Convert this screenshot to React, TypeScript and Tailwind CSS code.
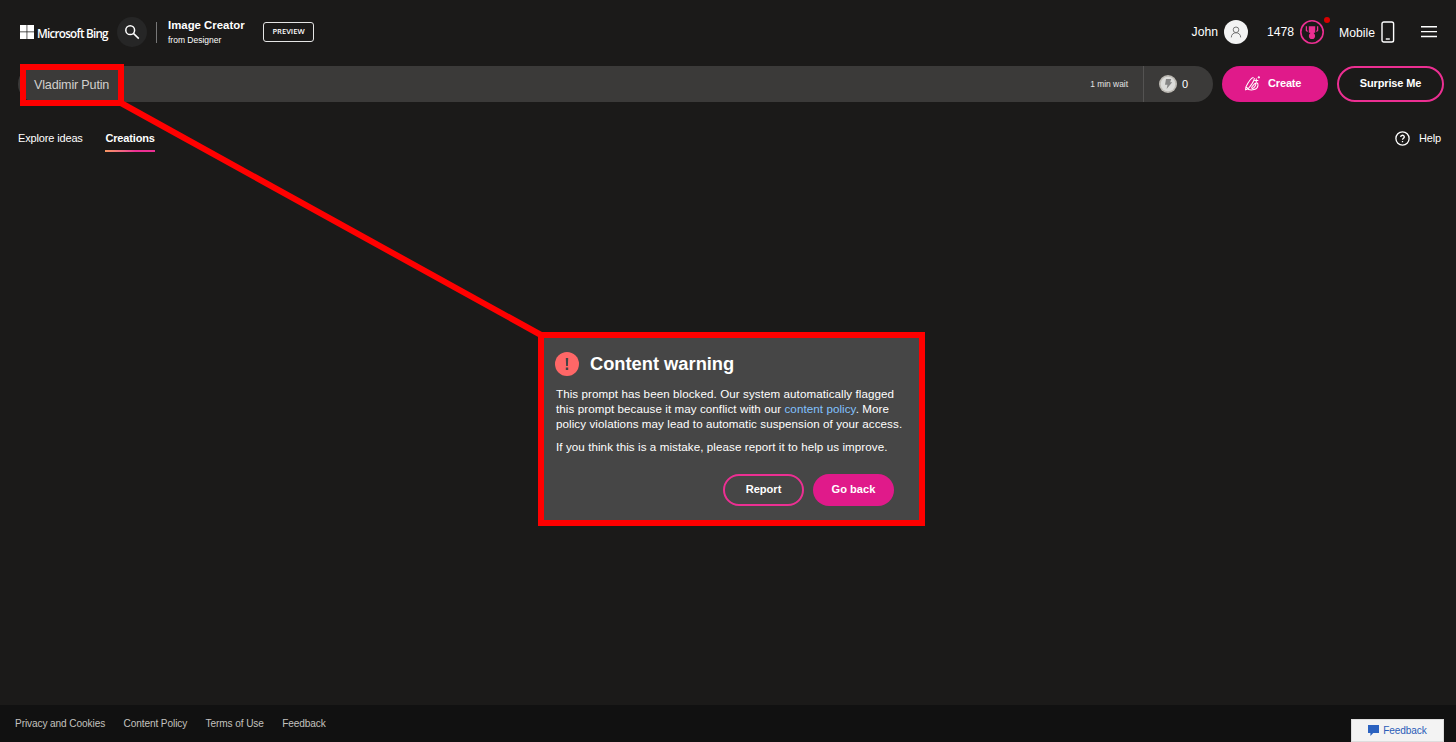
import React from "react";

const footerLinks = ["Privacy and Cookies", "Content Policy", "Terms of Use", "Feedback"];

const BingLogo = () => (
  <div className="flex items-center w-[97px]">
    <svg viewBox="0 0 14 14" className="w-[14px] h-[14px] mr-[3px] shrink-0" fill="#fff">
      <path d="M0 0h6.6v6.6H0zM7.3 0H14v6.6H7.3zM0 7.3h6.6V14H0zM7.3 7.3H14V14H7.3z" />
    </svg>
    <span className="font-['Open_Sans'] font-semibold text-[11.7px] leading-4 tracking-[-0.77px] pt-px whitespace-nowrap">
      Microsoft Bing
    </span>
  </div>
);

const Header = () => (
  <header className="flex items-center h-[64px] pl-5 pr-[19px]">
    <BingLogo />
    <button className="w-[30px] h-[30px] rounded-full bg-[#262626] flex items-center justify-center shrink-0">
      <svg viewBox="0 0 16 16" className="w-4 h-4" fill="none" stroke="#fff" strokeWidth="1.5">
        <circle cx="6.2" cy="6.2" r="4.4" />
        <path d="M9.4 9.4l5.4 5.2" />
      </svg>
    </button>
    <div className="w-px h-[21px] bg-[#777] ml-[9px] mr-[11px]" />
    <div className="w-[95px] whitespace-nowrap">
      <div className="font-bold text-[11.4px] leading-[14px]">Image Creator</div>
      <div className="text-[8.5px] leading-[14px] pt-px">from Designer</div>
    </div>
    <div className="w-[51px] h-5 border border-[#e5e5e5] rounded-[3px] flex items-center justify-center font-['Open_Sans'] font-semibold text-[7.6px]">
      PREVIEW
    </div>

    <div className="ml-auto flex items-center text-[12.2px]">
      <span>John</span>
      <span className="ml-[6px] w-6 h-6 rounded-full bg-[#f3f3f3] flex items-center justify-center">
        <svg viewBox="0 0 12 12" className="w-3 h-3" fill="none" stroke="#777" strokeWidth="1">
          <circle cx="6" cy="3.8" r="2.8" />
          <path d="M1.3 11.4c0-6.2 9.4-6.2 9.4 0" />
        </svg>
      </span>
      <span className="ml-[19px]">1478</span>
      <span className="relative ml-[6px]">
        <svg viewBox="0 0 24 24" className="w-6 h-6">
          <circle cx="12" cy="12" r="11.2" fill="none" stroke="#ec2f92" strokeWidth="1.6" />
          <path d="M8.8 6.2h6.4v6.6h-1.4v2h-3.6v-2H8.8z" fill="#ec2f92" />
          <path d="M6.4 6.2v4.2l1.2 1M17.6 6.2v4.2l-1.2 1" fill="none" stroke="#ec2f92" strokeWidth="1.3" />
          <circle cx="12" cy="16" r="3.1" fill="#ec2f92" />
        </svg>
        <span className="absolute -top-[3px] left-[24px] w-[6px] h-[6px] rounded-full bg-[#d80000]" />
      </span>
      <span className="ml-[15px] pt-[2px]">Mobile</span>
      <svg viewBox="0 0 14 22" className="ml-[6px] w-[14px] h-[22px]" fill="none" stroke="#fff" strokeWidth="1.4">
        <rect x="1" y="1" width="11.6" height="20" rx="1.8" />
        <path d="M4.8 18h4" />
      </svg>
      <svg viewBox="0 0 16 12" className="ml-[26px] w-4 h-3" stroke="#fff" strokeWidth="1.4">
        <path d="M0 .8h16M0 5.6h16M0 10.5h16" />
      </svg>
    </div>
  </header>
);

const PromptBar = () => (
  <div className="flex items-center pl-[18px] pr-3 mt-[2px] h-9">
    <div className="relative w-[1195px] h-9 rounded-full bg-[#3b3a39] flex items-center">
      <span className="pl-4 pt-[2px] text-[12.6px] tracking-[-0.18px] text-[#d2d0ce]">Vladimir Putin</span>
      <span className="ml-auto mr-[15px] text-[8.4px] text-[#e5e5e5]">1 min wait</span>
      <div className="w-[70px] h-9 border-l border-[#545352] flex items-center pl-[15px]">
        <svg viewBox="0 0 18 18" className="w-[18px] h-[18px]">
          <circle cx="9" cy="9" r="9" fill="#bdbab4" />
          <circle cx="9" cy="9" r="7.3" fill="#dcdcda" />
          <path d="M7 4h5.2l-1 3.2h2L7.6 14l.9-4.2H6z" fill="#858585" />
        </svg>
        <span className="ml-[5px] text-[11px]">0</span>
      </div>
      {/* callout box around the typed prompt */}
      <div className="absolute left-[2px] -top-[2px] w-[104px] h-[42px] border-[6px] border-[#ff0000]" />
    </div>
    <button className="ml-[9px] w-[106px] h-9 rounded-full bg-[#e01a8a] flex items-center pl-[23px] pb-px font-bold text-[11px] tracking-[-0.15px]">
      <svg viewBox="0 0 16 16" className="w-[15px] h-[15px] mr-[8px] shrink-0" fill="none" stroke="#fff" strokeWidth="1.1" strokeLinejoin="round" strokeLinecap="round">
        <path d="M8.8 1.6C6.4 2 3 7.6 1 11.6l-.4 3.2 2.8-1.2C6 10.6 9.6 5.4 10 2.6M1 11.6l2.4 2" />
        <path d="M3.6 14.4c3.4 1 9.6.6 10.2-4.2.4-2.8-1.6-3.6-3.4-2-2 1.8-4.2 4.6-2.8 5 1.6.4 4-3 4-4.6" />
        <path d="M12 3v3.6M10.2 4.8h3.6M14.8.6v1.6M14 1.4h1.6" />
      </svg>
      Create
    </button>
    <button className="ml-[9px] w-[107px] h-9 pb-px rounded-full border-2 border-[#ec2f92] font-bold text-[11px] tracking-[-0.15px]">
      Surprise Me
    </button>
  </div>
);

const Tabs = () => (
  <nav className="flex items-start pl-[18px] pr-[15px] mt-[28px] text-[11px] tracking-[-0.15px] leading-4">
    <span className="w-[87.4px]">Explore ideas</span>
    <div className="font-bold">
      Creations
      <div className="mt-[4px] h-[2px] bg-linear-to-r from-[#f79661] to-[#ec2f92] to-60%" />
    </div>
    <div className="ml-auto flex items-center">
      <svg viewBox="0 0 15 15" className="w-[15px] h-[15px] mr-[9px]" fill="none" stroke="#fff" strokeWidth="1.3">
        <circle cx="7.5" cy="7.5" r="6.6" />
        <path d="M5.7 6.1c0-2.5 3.6-2.4 3.6-.2 0 1.3-1.8 1.3-1.8 2.9M7.5 9.9v1.4" />
      </svg>
      Help
    </div>
  </nav>
);

const ContentWarning = () => (
  <section className="absolute left-[538px] top-[332px] w-[387px] h-[194px] border-[6px] border-[#ff0000] bg-[#464646] pl-3 pt-[14px]">
    <div className="flex items-center">
      <svg viewBox="0 0 24 24" className="-ml-[1px] w-6 h-6 mr-[11px]">
        <circle cx="12" cy="12" r="12" fill="#ff6767" />
        <path d="M10.8 6h2.4l-.3 8h-1.8zM10.8 15.6h2.4V18h-2.4z" fill="#444" />
      </svg>
      <h2 className="font-bold text-[18.3px] leading-6">Content warning</h2>
    </div>
    <p className="mt-[10px] text-[11.6px] leading-[15.2px] tracking-[0.08px] whitespace-nowrap">
      This prompt has been blocked. Our system automatically flagged
      <br />
      this prompt because it may conflict with our <a className="text-[#82c2ff]">content policy</a>. More
      <br />
      policy violations may lead to automatic suspension of your access.
    </p>
    <p className="mt-[7px] text-[11.6px] leading-[15.2px] tracking-[0.08px] whitespace-nowrap">
      If you think this is a mistake, please report it to help us improve.
    </p>
    <div className="flex justify-end gap-[9px] mt-[20px] pr-[25px] font-bold text-[11.1px]">
      <button className="w-[81px] h-8 pb-px rounded-full border-2 border-[#ec2f92]">Report</button>
      <button className="w-[81px] h-8 pb-px rounded-full bg-[#e01a8a]">Go back</button>
    </div>
  </section>
);

const App: React.FC = () => {
  return (
    <div className="relative h-screen overflow-hidden flex flex-col bg-[#1b1a19] text-white font-['Liberation_Sans',Arial,sans-serif]">
      <Header />
      <PromptBar />
      <Tabs />

      <footer className="relative mt-auto h-[37px] bg-[#111] flex items-center gap-[18.4px] pl-[15px] pt-px text-[10.1px] tracking-[-0.1px] text-[#c3c1bf]">
        {footerLinks.map((link) => (
          <a key={link}>{link}</a>
        ))}
        <button className="absolute right-3 bottom-0 w-[93px] h-[23px] bg-[#f3f3f3] border border-[#ddd] text-[#2b5cb8] flex items-center justify-center">
          <svg viewBox="0 0 11 11" className="w-[11px] h-[11px] mr-1" fill="#2b62c0">
            <path d="M0 0h11v8H5.2L2.4 11V8H0z" />
          </svg>
          Feedback
        </button>
      </footer>

      {/* connector from the prompt to the warning */}
      <svg viewBox="0 0 1456 742" className="absolute inset-0 w-full h-full pointer-events-none">
        <path d="M121 103L541 335" stroke="#ff0000" strokeWidth="6" />
      </svg>
      <ContentWarning />
    </div>
  );
};

export default App;
